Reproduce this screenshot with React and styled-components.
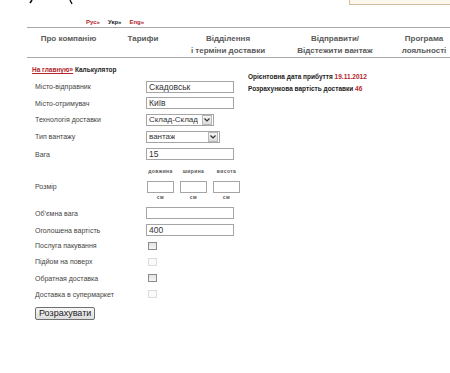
import React from "react";
import styled, { createGlobalStyle } from "styled-components";

const GlobalStyle = createGlobalStyle`
  body {
    margin: 0;
    background: #fff;
    font-family: "Liberation Sans", Arial, sans-serif;
    color: #333;
  }
`;

const rows = [
  { label: "Місто-відправник", h: 17, kind: "input", value: "Скадовськ" },
  { label: "Місто-отримувач", h: 16, kind: "input", value: "Київ" },
  { label: "Технологія доставки", h: 17, kind: "select", value: "Склад-Склад", w: 68 },
  { label: "Тип вантажу", h: 17, kind: "select", value: "вантаж", w: 74 },
  { label: "Вага", h: 18, kind: "input", value: "15" },
];

const rowsAfter = [
  { label: "Об’ємна вага", h: 18, kind: "input", value: "", top: 4 },
  { label: "Оголошена вартість", h: 16, kind: "input", value: "400" },
  { label: "Послуга пакування", h: 15, kind: "check" },
  { label: "Підйом на поверх", h: 17, kind: "check", disabled: true },
  { label: "Обратная доставка", h: 16, kind: "check" },
  { label: "Доставка в супермаркет", h: 16, kind: "check", disabled: true },
];

const Control = ({ row }) => {
  if (row.kind === "input") return <TextInput defaultValue={row.value} />;
  if (row.kind === "select")
    return (
      <SelectBox $w={row.w}>
        <SelectText>{row.value}</SelectText>
        <ArrowBtn>
          <svg width="6" height="4" viewBox="0 0 6 4">
            <path d="M0.5 0.5 L3 3 L5.5 0.5" fill="none" stroke="#333" strokeWidth="1.2" />
          </svg>
        </ArrowBtn>
      </SelectBox>
    );
  return <Check $disabled={row.disabled} />;
};

const FormRow = ({ row }) => (
  <Row $h={row.h} $top={row.top}>
    <Label>{row.label}</Label>
    <Control row={row} />
  </Row>
);

export default function App() {
  return (
    <Page>
      <GlobalStyle />
      <TopBar>
        <Logo width="50" height="6" viewBox="0 0 50 6">
          <path d="M3 0 L1 3" stroke="#111" strokeWidth="1.6" />
          <path d="M41 0 L43 4" stroke="#111" strokeWidth="1.4" />
        </Logo>
        <SearchStub />
      </TopBar>
      <LangRow>
        <Lang $red>Рус»</Lang>
        <Lang>Укр»</Lang>
        <Lang $red>Eng»</Lang>
      </LangRow>
      <Nav>
        <NavItem>Про компанію</NavItem>
        <NavItem>Тарифи</NavItem>
        <NavItem>
          Відділення
          <br />і терміни доставки
        </NavItem>
        <NavItem>
          Відправити/
          <br />
          Відстежити вантаж
        </NavItem>
        <NavItem>
          Програма
          <br />
          лояльності
        </NavItem>
      </Nav>
      <Main>
        <Form>
          <Crumbs>
            <CrumbLink>На главную»</CrumbLink> Калькулятор
          </Crumbs>
          <Rows>
            {rows.map((r) => (
              <FormRow key={r.label} row={r} />
            ))}
            <Row $h={16}>
              <span />
              <DimRow>
                <DimCaption>довжина</DimCaption>
                <DimCaption>ширина</DimCaption>
                <DimCaption>висота</DimCaption>
              </DimRow>
            </Row>
            <Row $h={15}>
              <Label>Розмір</Label>
              <DimRow>
                <SmallInput />
                <SmallInput />
                <SmallInput />
              </DimRow>
            </Row>
            <Row $h={6}>
              <span />
              <DimRow>
                <DimCaption>см</DimCaption>
                <DimCaption>см</DimCaption>
                <DimCaption>см</DimCaption>
              </DimRow>
            </Row>
            {rowsAfter.map((r) => (
              <FormRow key={r.label} row={r} />
            ))}
          </Rows>
          <Submit>Розрахувати</Submit>
        </Form>
        <Info>
          <div>
            Орієнтовна дата прибуття <Red>19.11.2012</Red>
          </div>
          <div>
            Розрахункова вартість доставки <Red>46</Red>
          </div>
        </Info>
      </Main>
    </Page>
  );
}

const Page = styled.div`
  width: 450px;
  height: 373px;
  overflow: hidden;
`;

const TopBar = styled.div`
  height: 16px;
  display: flex;
  justify-content: space-between;
  align-items: flex-start;
`;

const Logo = styled.svg`
  margin-left: 29px;
  display: block;
`;

const SearchStub = styled.div`
  width: 100px;
  height: 4px;
  background: #fcf7ec;
  border: 1px solid #d6bb9c;
  border-top: none;
  border-right: none;
`;

const LangRow = styled.div`
  height: 11px;
  padding-left: 86px;
  display: flex;
  gap: 8px;
  align-items: center;
`;

const Lang = styled.span`
  font-size: 6px;
  font-weight: bold;
  color: ${(p) => (p.$red ? "#b3262a" : "#222")};
`;

const Nav = styled.nav`
  margin-left: 27px;
  height: 24px;
  padding-top: 5px;
  border-top: 1px solid #a9a9a9;
  border-bottom: 1px solid #a9a9a9;
  display: grid;
  grid-template-columns: 83px 66px 104px 110px 68px;
`;

const NavItem = styled.div`
  font-size: 8px;
  font-weight: bold;
  color: #5a5a5a;
  line-height: 12px;
  text-align: center;
  white-space: nowrap;
  display: flex;
  flex-direction: column;
  align-items: center;
`;

const Main = styled.div`
  display: flex;
  padding-left: 32px;
`;

const Form = styled.div`
  width: 216px;
`;

const Crumbs = styled.div`
  margin-top: 7px;
  height: 13px;
  line-height: 10px;
  font-size: 6.5px;
  font-weight: bold;
  color: #222;
`;

const CrumbLink = styled.span`
  color: #b3262a;
  text-decoration: underline;
`;

const Rows = styled.div`
  padding-left: 3px;
`;

const Row = styled.div`
  display: grid;
  grid-template-columns: 111px auto;
  align-items: center;
  height: ${(p) => p.$h}px;
  margin-top: ${(p) => p.$top || 0}px;
`;

const Label = styled.span`
  font-size: 7px;
  color: #444;
  white-space: nowrap;
`;

const TextInput = styled.input`
  box-sizing: border-box;
  width: 88px;
  height: 12px;
  border: 1px solid #a5a5a5;
  padding: 0 2px;
  font-family: "Liberation Sans", Arial, sans-serif;
  font-size: 8.5px;
  color: #333;
  outline: none;
`;

const SelectBox = styled.div`
  box-sizing: border-box;
  width: ${(p) => p.$w}px;
  height: 12px;
  border: 1px solid #a5a5a5;
  display: flex;
  align-items: center;
  justify-content: space-between;
  padding-left: 2px;
  background: #fff;
`;

const SelectText = styled.span`
  font-size: 8px;
  color: #333;
  white-space: nowrap;
  overflow: hidden;
`;

const ArrowBtn = styled.span`
  flex: none;
  width: 8px;
  height: 8px;
  margin-right: 1px;
  border: 1px solid #b8b8b8;
  background: linear-gradient(#f4f4f4, #dcdcdc);
  display: flex;
  align-items: center;
  justify-content: center;
`;

const DimRow = styled.div`
  display: flex;
  gap: 6px;
  margin-left: 1px;
`;

const DimCaption = styled.span`
  width: 27px;
  text-align: center;
  font-size: 5px;
  font-weight: bold;
  letter-spacing: 0.4px;
  color: #555;
`;

const SmallInput = styled.input`
  box-sizing: border-box;
  width: 27px;
  height: 12px;
  border: 1px solid #a5a5a5;
  outline: none;
`;

const Check = styled.span`
  box-sizing: border-box;
  width: 9px;
  height: 8px;
  margin-left: 2px;
  border: 1px solid ${(p) => (p.$disabled ? "#dcdcdc" : "#8a8a8a")};
  background: ${(p) =>
    p.$disabled ? "#fafafa" : "linear-gradient(#e2e2e2, #f6f6f6)"};
`;

const Submit = styled.button`
  margin: 4px 0 0 3px;
  height: 13px;
  padding: 0 3px;
  font-family: "Liberation Sans", Arial, sans-serif;
  font-size: 9px;
  color: #222;
  border: 1px solid #707070;
  border-radius: 2px;
  background: linear-gradient(#f6f6f6, #dddddd);
  line-height: 11px;
`;

const Info = styled.div`
  padding-top: 13px;
  font-size: 6.5px;
  font-weight: bold;
  color: #222;
  line-height: 12px;
  white-space: nowrap;
`;

const Red = styled.span`
  color: #b3262a;
`;
